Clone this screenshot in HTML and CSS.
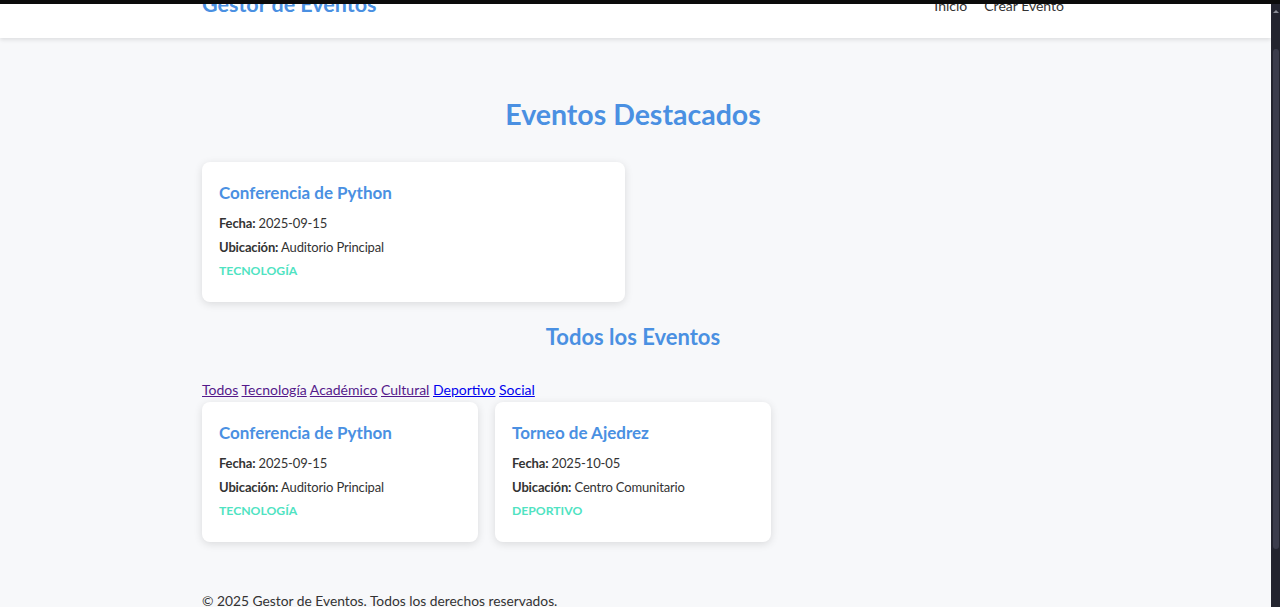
FILE: index.html
```html
<!DOCTYPE html>
<html lang="es">
<head>
<meta charset="utf-8">
<title>Gestor de Eventos</title>
<link rel="stylesheet" href="styles.css">
</head>
<body>
<div class="topbar"></div>
<div class="window">
  <div class="page">
    <header class="site-header">
      <div class="container header-inner">
        <h1 class="logo">Gestor de Eventos</h1>
        <nav class="nav">
          <a href="#" class="nav-link">Inicio</a>
          <a href="#" class="nav-link">Crear Evento</a>
        </nav>
      </div>
    </header>
    <main class="container main">
      <h2 class="section-title">Eventos Destacados</h2>
      <div class="featured-grid">
        <article class="card">
          <h3 class="card-title">Conferencia de Python</h3>
          <p class="card-line"><strong>Fecha:</strong> 2025-09-15</p>
          <p class="card-line"><strong>Ubicación:</strong> Auditorio Principal</p>
          <p class="card-tag">Tecnología</p>
        </article>
      </div>
      <h2 class="section-subtitle">Todos los Eventos</h2>
      <div class="filters">
        <a href="#" class="filter visited">Todos</a>
        <a href="#" class="filter visited">Tecnología</a>
        <a href="#" class="filter visited">Académico</a>
        <a href="#" class="filter visited">Cultural</a>
        <a href="#" class="filter">Deportivo</a>
        <a href="#" class="filter">Social</a>
      </div>
      <div class="events-grid">
        <article class="card">
          <h3 class="card-title">Conferencia de Python</h3>
          <p class="card-line"><strong>Fecha:</strong> 2025-09-15</p>
          <p class="card-line"><strong>Ubicación:</strong> Auditorio Principal</p>
          <p class="card-tag">Tecnología</p>
        </article>
        <article class="card">
          <h3 class="card-title">Torneo de Ajedrez</h3>
          <p class="card-line"><strong>Fecha:</strong> 2025-10-05</p>
          <p class="card-line"><strong>Ubicación:</strong> Centro Comunitario</p>
          <p class="card-tag">Deportivo</p>
        </article>
      </div>
    </main>
    <footer class="container footer">
      <p class="footer-text">© 2025 Gestor de Eventos. Todos los derechos reservados.</p>
    </footer>
  </div>
  <div class="scrollbar"><div class="scroll-arrow"></div><div class="scroll-thumb"></div></div>
</div>
</body>
</html>
```

FILE: styles.css
```css
* { box-sizing: border-box; }
html, body { margin: 0; padding: 0; }
body {
  font-family: Lato, "Open Sans", sans-serif;
  color: #333;
  background: #f7f8fa;
  height: 607px;
  overflow: hidden;
}
.topbar { height: 4px; background: #0b0b0b; }
.window { display: flex; height: 603px; }
.page { flex: 1; overflow: hidden; background: #f7f8fa; }
.scrollbar { width: 9px; background: #23242f; display: flex; flex-direction: column; align-items: center; }
.scroll-arrow { margin-top: 6px; width: 0; height: 0; border-left: 3px solid transparent; border-right: 3px solid transparent; border-bottom: 3px solid #8a8b96; }
.scroll-thumb { margin-top: 36px; width: 6px; height: 500px; background: #3b3c4c; border-radius: 3px; }

.container { width: 862px; margin-left: 202px; }

.site-header {
  background: #fff;
  height: 68px;
  margin-top: -34px;
  box-shadow: 0 2px 4px rgba(0,0,0,0.1);
  position: relative;
}
.header-inner { height: 100%; display: flex; align-items: center; justify-content: space-between; }
.logo { margin: 0; font-size: 21.5px; line-height: 30px; color: #4a90e2; font-weight: 700; }
.nav { display: flex; gap: 17px; margin-top: 2px; }
.nav-link { color: #333; text-decoration: none; font-size: 14px; }

.main { padding-top: 59px; }
.section-title {
  margin: 0 0 31px;
  text-align: center;
  font-size: 28.5px;
  line-height: 34px;
  color: #4a90e2;
  font-weight: 700;
}
.featured-grid { display: grid; grid-template-columns: repeat(2, 1fr); gap: 16px; }
.events-grid { display: grid; grid-template-columns: repeat(3, 1fr); gap: 17px; }

.card {
  background: #fff;
  border-radius: 8px;
  box-shadow: 0 2px 8px rgba(0,0,0,0.12);
  padding: 18px 17px 16px;
  height: 140px;
}
.card-title { margin: 0 0 8px; font-size: 17px; line-height: 25px; color: #4a90e2; font-weight: 700; }
.card-line { margin: 0 0 4px; font-size: 13px; line-height: 20px; color: #333; letter-spacing: -0.15px; }
.card-line strong { font-weight: 700; }
.card-tag { margin: 0; font-size: 12.2px; line-height: 20px; color: #50e3c2; font-weight: 700; text-transform: uppercase; }

.section-subtitle {
  margin: 20px 0 28px;
  text-align: center;
  font-size: 22px;
  line-height: 30px;
  color: #4a90e2;
  font-weight: 700;
}
.filters { font-size: 14px; line-height: 20px; margin-bottom: 2px; }
.filter { color: #0000ee; }
.filter.visited { color: #551a8b; }

.footer { padding-top: 49px; }
.footer-text { margin: 0; font-size: 13.8px; line-height: 20px; color: #333; }
```
